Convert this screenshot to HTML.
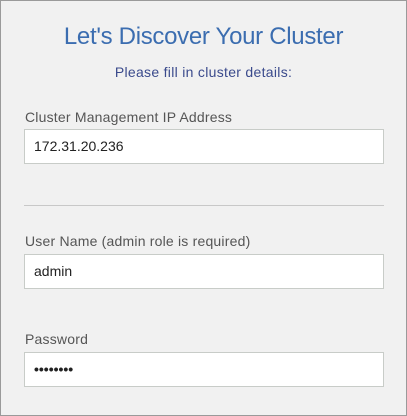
<!DOCTYPE html>
<html><head><style>
html,body{margin:0;padding:0}
body{width:407px;height:416px;overflow:hidden;background:#f1f1f1;font-family:"Liberation Sans",sans-serif;position:relative}
.frame{position:absolute;left:0;top:0;width:405px;height:414px;border:1px solid #9a9a9a}
.t{position:absolute;left:0;width:407px;text-align:center}
.lbl{position:absolute;left:25px;font-size:14px;color:#555;letter-spacing:0.2px}
.in{position:absolute;left:24px;background:#fff;border:1px solid #c8ccc8;font-size:14px;color:#222;line-height:33px;padding-left:9px;box-sizing:border-box;width:360px;height:35px}
</style></head><body>
<div class="frame"></div>
<div class="t" style="top:23px;font-size:24px;color:#3b6db0;letter-spacing:-0.3px">Let's Discover Your Cluster</div>
<div class="t" style="top:64px;font-size:14px;color:#3a4a8c;letter-spacing:0.3px">Please fill in cluster details:</div>
<div class="lbl" style="top:109px">Cluster Management IP Address</div>
<div class="in" style="top:129px">172.31.20.236</div>
<div style="position:absolute;left:24px;top:205px;width:360px;height:1px;background:#c8c8c8"></div>
<div class="lbl" style="top:233px">User Name (admin role is required)</div>
<div class="in" style="top:254px">admin</div>
<div class="lbl" style="top:331px">Password</div>
<div class="in" style="top:352px;font-size:14px;letter-spacing:0px;font-weight:bold">••••••••</div>
</body></html>
